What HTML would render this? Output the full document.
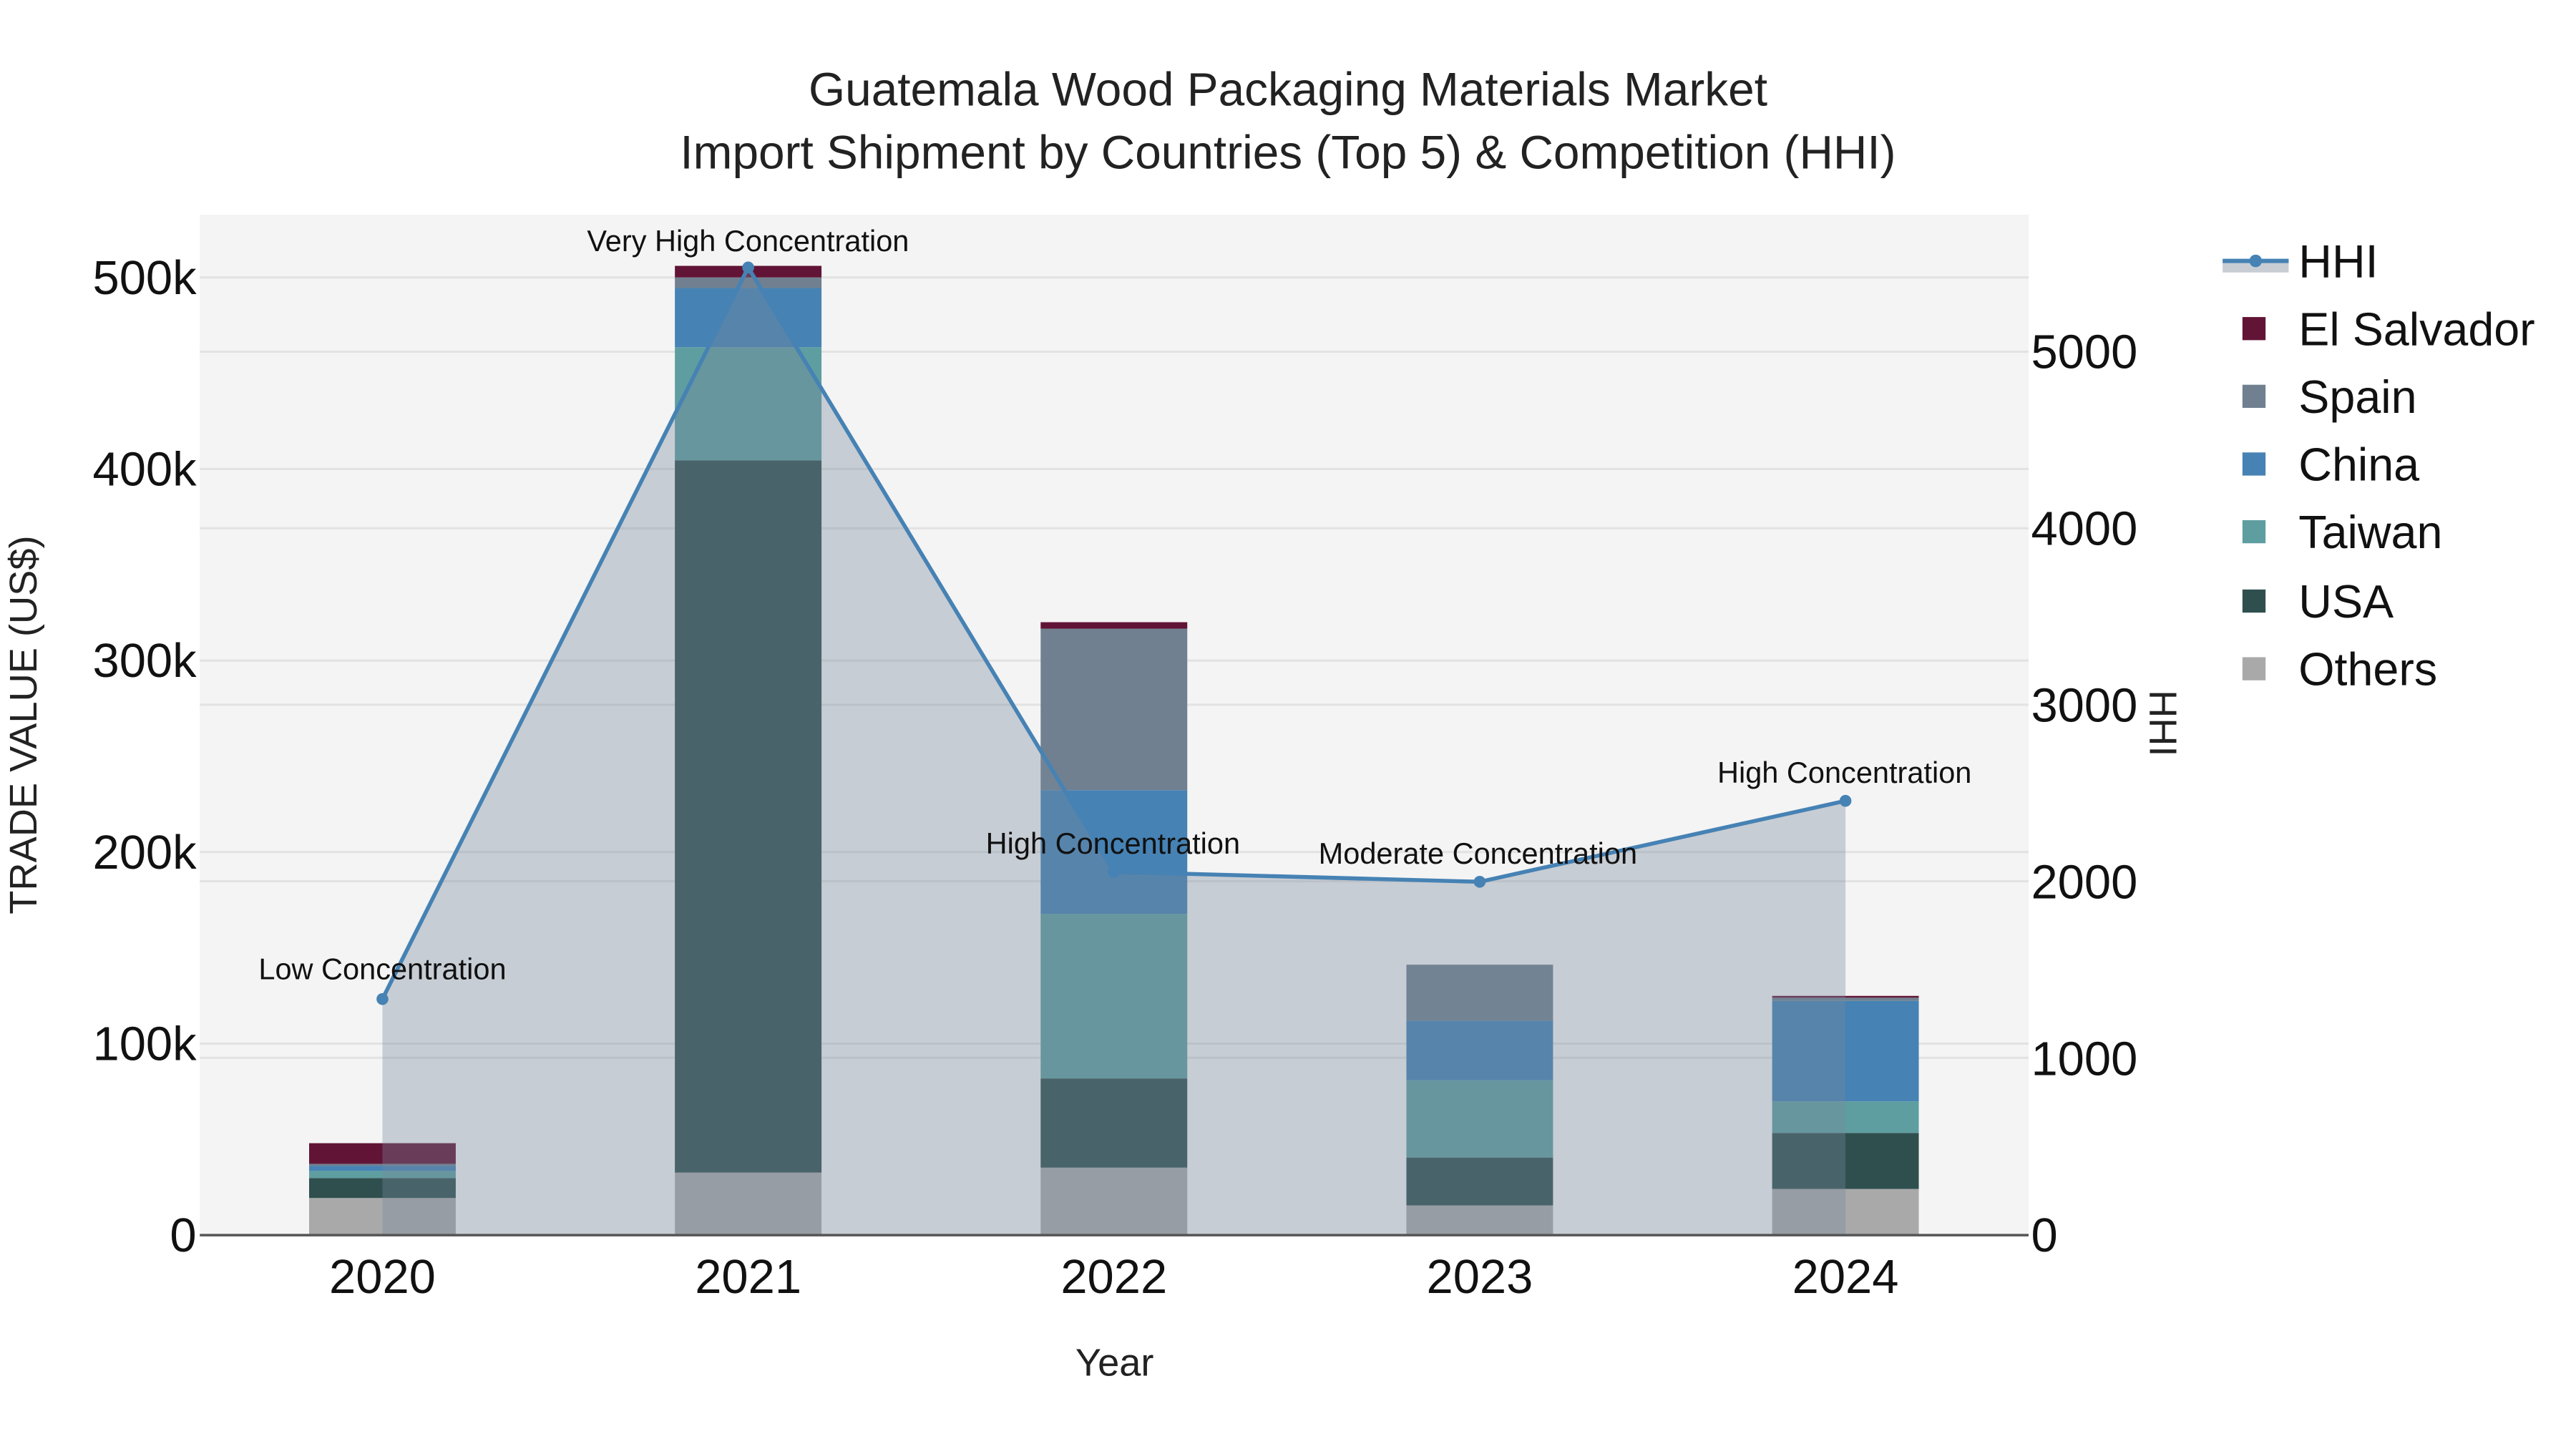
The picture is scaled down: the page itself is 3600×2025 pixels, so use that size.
<!DOCTYPE html>
<html><head><meta charset="utf-8"><style>
html,body{margin:0;padding:0;background:#fff;}
svg{display:block;font-family:"Liberation Sans",sans-serif;}
</style></head><body>
<svg width="3600" height="2025" viewBox="0 0 1560 877.5" xmlns="http://www.w3.org/2000/svg">
<rect width="1560" height="877.5" fill="#fff"/>
<rect x="121" y="130" width="1107.5" height="618" fill="#f4f4f4"/>
<g stroke="#e2e2e2" stroke-width="1.3">
<line x1="121" x2="1228.5" y1="632" y2="632"/><line x1="121" x2="1228.5" y1="516" y2="516"/>
<line x1="121" x2="1228.5" y1="400" y2="400"/><line x1="121" x2="1228.5" y1="284" y2="284"/>
<line x1="121" x2="1228.5" y1="168" y2="168"/>
<line x1="121" x2="1228.5" y1="640.6" y2="640.6"/><line x1="121" x2="1228.5" y1="533.7" y2="533.7"/>
<line x1="121" x2="1228.5" y1="426.8" y2="426.8"/><line x1="121" x2="1228.5" y1="319.9" y2="319.9"/>
<line x1="121" x2="1228.5" y1="213" y2="213"/>
</g>
<g>
<rect x="187.2" y="725.5" width="88.8" height="22.5" fill="#a9a9a9"/>
<rect x="187.2" y="713.4" width="88.8" height="12.1" fill="#2f4f4f"/>
<rect x="187.2" y="709.1" width="88.8" height="4.3" fill="#5f9ea0"/>
<rect x="187.2" y="706.1" width="88.8" height="3" fill="#4682b4"/>
<rect x="187.2" y="704.8" width="88.8" height="1.3" fill="#708090"/>
<rect x="187.2" y="692.3" width="88.8" height="12.5" fill="#621436"/>
<rect x="408.7" y="710.1" width="88.8" height="37.9" fill="#a9a9a9"/>
<rect x="408.7" y="278.8" width="88.8" height="431.3" fill="#2f4f4f"/>
<rect x="408.7" y="210.3" width="88.8" height="68.5" fill="#5f9ea0"/>
<rect x="408.7" y="174.4" width="88.8" height="35.9" fill="#4682b4"/>
<rect x="408.7" y="168" width="88.8" height="6.4" fill="#708090"/>
<rect x="408.7" y="161" width="88.8" height="7" fill="#621436"/>
<rect x="630.2" y="707.1" width="88.8" height="40.9" fill="#a9a9a9"/>
<rect x="630.2" y="653.1" width="88.8" height="54" fill="#2f4f4f"/>
<rect x="630.2" y="553.4" width="88.8" height="99.7" fill="#5f9ea0"/>
<rect x="630.2" y="478.5" width="88.8" height="74.9" fill="#4682b4"/>
<rect x="630.2" y="380.7" width="88.8" height="97.8" fill="#708090"/>
<rect x="630.2" y="376.8" width="88.8" height="3.9" fill="#621436"/>
<rect x="851.7" y="730" width="88.8" height="18" fill="#a9a9a9"/>
<rect x="851.7" y="701" width="88.8" height="29" fill="#2f4f4f"/>
<rect x="851.7" y="654.2" width="88.8" height="46.8" fill="#5f9ea0"/>
<rect x="851.7" y="618.2" width="88.8" height="36" fill="#4682b4"/>
<rect x="851.7" y="584.2" width="88.8" height="34" fill="#708090"/>
<rect x="1073.2" y="720" width="88.8" height="28" fill="#a9a9a9"/>
<rect x="1073.2" y="686.1" width="88.8" height="33.9" fill="#2f4f4f"/>
<rect x="1073.2" y="667" width="88.8" height="19.1" fill="#5f9ea0"/>
<rect x="1073.2" y="606.1" width="88.8" height="60.9" fill="#4682b4"/>
<rect x="1073.2" y="604.2" width="88.8" height="1.9" fill="#708090"/>
<rect x="1073.2" y="603.1" width="88.8" height="1.1" fill="#621436"/>
</g>
<polygon points="231.6,605 453.1,162 674.6,528 896.1,534 1117.6,485 1117.6,748 231.6,748" fill="rgb(120,135,155)" fill-opacity="0.36"/>
<polyline points="231.6,605 453.1,162 674.6,528 896.1,534 1117.6,485" fill="none" stroke="#4682b4" stroke-width="2.4"/>
<g fill="#4682b4">
<circle cx="231.6" cy="605" r="3.6"/><circle cx="453.1" cy="162" r="3.6"/><circle cx="674.6" cy="528" r="3.6"/><circle cx="896.1" cy="534" r="3.6"/><circle cx="1117.6" cy="485" r="3.6"/>
</g>
<line x1="121" x2="1228.5" y1="748" y2="748" stroke="#555" stroke-width="1.5"/>
<g font-size="18" fill="#111" text-anchor="middle">
<text x="231.6" y="593">Low Concentration</text>
<text x="453" y="152">Very High Concentration</text>
<text x="674" y="517">High Concentration</text>
<text x="895" y="523">Moderate Concentration</text>
<text x="1117" y="474">High Concentration</text>
</g>
<g font-size="28.5" fill="#222" text-anchor="middle">
<text x="780" y="64">Guatemala Wood Packaging Materials Market</text>
<text x="780" y="102">Import Shipment by Countries (Top 5) &amp; Competition (HHI)</text>
</g>
<g font-size="29" fill="#111" text-anchor="end">
<text x="119" y="758">0</text><text x="119" y="642">100k</text><text x="119" y="526">200k</text>
<text x="119" y="410">300k</text><text x="119" y="294">400k</text><text x="119" y="178">500k</text>
</g>
<g font-size="29" fill="#111" text-anchor="start">
<text x="1230" y="758">0</text><text x="1230" y="651">1000</text><text x="1230" y="544">2000</text>
<text x="1230" y="437">3000</text><text x="1230" y="330">4000</text><text x="1230" y="223">5000</text>
</g>
<g font-size="29" fill="#111" text-anchor="middle">
<text x="231.6" y="783">2020</text><text x="453.1" y="783">2021</text><text x="674.6" y="783">2022</text>
<text x="896.1" y="783">2023</text><text x="1117.6" y="783">2024</text>
</g>
<text x="675" y="833" font-size="23.5" fill="#222" text-anchor="middle">Year</text>
<text transform="translate(22,439) rotate(-90)" font-size="23.5" fill="#222" text-anchor="middle">TRADE VALUE (US$)</text>
<text transform="translate(1302,438) rotate(90)" font-size="23.5" fill="#222" text-anchor="middle">HHI</text>
<rect x="1346" y="158" width="40" height="7" fill="#c8cdd4"/>
<line x1="1346" x2="1386" y1="158" y2="158" stroke="#4682b4" stroke-width="2.6"/>
<circle cx="1366" cy="158" r="3.8" fill="#4682b4"/>
<g font-size="28" fill="#111">
<text x="1392" y="168">HHI</text>
<text x="1392" y="209">El Salvador</text>
<text x="1392" y="250">Spain</text>
<text x="1392" y="291">China</text>
<text x="1392" y="332">Taiwan</text>
<text x="1392" y="374">USA</text>
<text x="1392" y="415">Others</text>
</g>
<rect x="1358" y="192" width="14" height="14" fill="#621436"/>
<rect x="1358" y="233" width="14" height="14" fill="#708090"/>
<rect x="1358" y="274" width="14" height="14" fill="#4682b4"/>
<rect x="1358" y="315" width="14" height="14" fill="#5f9ea0"/>
<rect x="1358" y="357" width="14" height="14" fill="#2f4f4f"/>
<rect x="1358" y="398" width="14" height="14" fill="#a9a9a9"/>
</svg>
</body></html>
